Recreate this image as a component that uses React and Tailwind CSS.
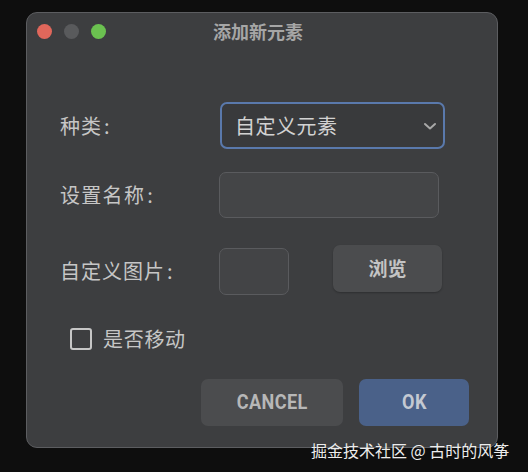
import React from "react";

const cjk = { fontFamily: '"Noto Sans CJK SC", "Noto Sans", sans-serif' };
const btnFont = { fontFamily: '"Roboto", "Liberation Sans", sans-serif' };

export default function App() {
  return (
    <div className="relative w-[528px] h-[472px] bg-[#0e0e0e] pl-[26px] pt-[12px] overflow-hidden" style={cjk}>
      <div className="w-[472px] h-[436px] rounded-[11px] border border-[#5c5d60] bg-[#3d3e40] flex flex-col">
        {/* title bar */}
        <div className="relative h-[36px] flex items-center pl-[10px] shrink-0">
          <div className="flex gap-[12px]">
            <span className="w-[15px] h-[15px] rounded-full bg-[#e0675b]" />
            <span className="w-[15px] h-[15px] rounded-full bg-[#595a5c]" />
            <span className="w-[15px] h-[15px] rounded-full bg-[#6bc150]" />
          </div>
          <div className="absolute inset-0 flex items-center justify-center text-[18px] font-bold text-[#a6a6a6] pr-[8px]">
            添加新元素
          </div>
        </div>

        {/* form */}
        <div className="flex flex-col pl-[33px] pt-[53px]">
          <div className="flex items-center h-[47px]">
            <div className="w-[160px] text-[20px] tracking-[1px] text-[#c6c6c6]">种类<span className="ml-[2px]">:</span></div>
            <div className="w-[225px] h-[47px] rounded-[7px] border-2 border-[#5a79ac] bg-[#393a3c] flex items-center justify-between pl-[13px] pr-[6px]">
              <span className="text-[20px] tracking-[0.5px] text-[#d2d2d2]">自定义元素</span>
              <svg width="14" height="10" viewBox="0 0 14 10" fill="none">
                <path d="M2 3 L7 7.5 L12 3" stroke="#a8a8a8" strokeWidth="2" strokeLinecap="round" strokeLinejoin="round" />
              </svg>
            </div>
          </div>

          <div className="flex items-center h-[46px] mt-[23px]">
            <div className="w-[159px] text-[20px] tracking-[1.3px] text-[#c6c6c6]">设置名称<span className="ml-[2px]">:</span></div>
            <div className="w-[220px] h-[46px] rounded-[7px] border border-[#5a5b5e] bg-[#444547]" />
          </div>

          <div className="flex items-center h-[49px] mt-[27px]">
            <div className="w-[159px] text-[20px] tracking-[1px] text-[#c6c6c6] mt-[3px]">自定义图片<span className="ml-[2px]">:</span></div>
            <div className="w-[70px] h-[47px] rounded-[7px] border border-[#5a5b5e] bg-[#434446] mt-[3px]" />
            <div className="ml-[44px] w-[109px] h-[47px] rounded-[7px] bg-[#4b4c4e] flex items-center justify-center text-[19px] font-bold text-[#c4c4c4] mb-[2px] shadow-[0_1px_2px_rgba(0,0,0,0.25)]">
              浏览
            </div>
          </div>

          <div className="flex items-center h-[24px] mt-[33px] pl-[10px]">
            <span className="w-[22px] h-[22px] rounded-[3px] border-2 border-[#c6c6c6]" />
            <span className="ml-[11px] text-[20px] tracking-[0.7px] text-[#c6c6c6]">是否移动</span>
          </div>

          <div className="flex h-[47px] mt-[28px] pl-[141px] gap-[16px]">
            <div className="w-[142px] h-[47px] rounded-[7px] bg-[#4b4c4e] flex items-center justify-center">
              <span className="text-[21px] font-bold tracking-[0.5px] text-[#b7b7b7] scale-x-[0.86]" style={btnFont}>CANCEL</span>
            </div>
            <div className="w-[110px] h-[47px] rounded-[7px] bg-[#4a6189] flex items-center justify-center">
              <span className="text-[21px] font-bold tracking-[0.5px] text-[#c4c9d2] scale-x-[0.86]" style={btnFont}>OK</span>
            </div>
          </div>
        </div>
      </div>

      <div className="absolute left-[311px] top-[438px] text-[16px] text-[#ececec] whitespace-nowrap leading-[24px]">
        掘金技术社区 @ 古时的风筝
      </div>
    </div>
  );
}
